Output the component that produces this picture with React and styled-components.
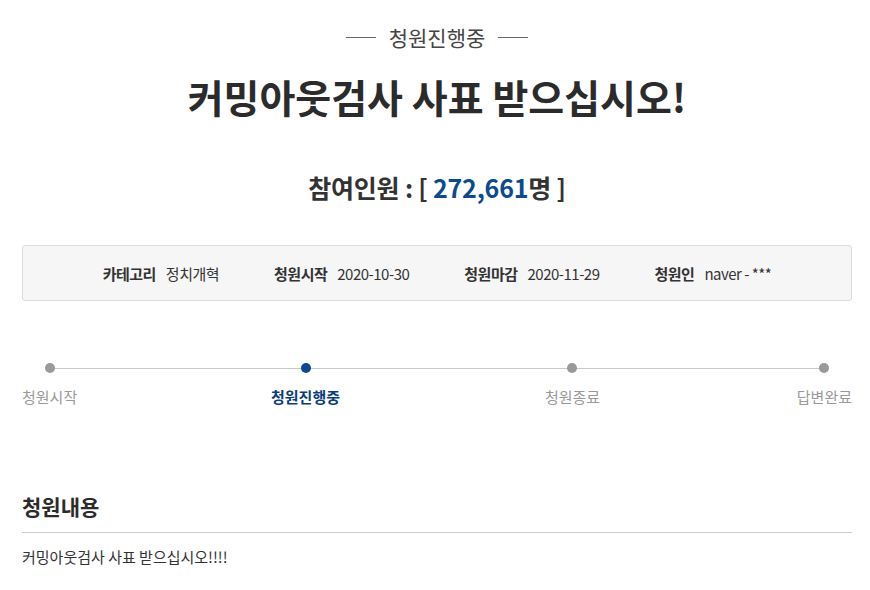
import React from "react";
import styled, { createGlobalStyle } from "styled-components";

const GlobalStyle = createGlobalStyle`
  body {
    margin: 0;
    background: #fff;
    font-family: "Noto Sans CJK KR", "Noto Sans", sans-serif;
    color: #333;
  }
`;

const steps = [
  { label: "청원시작", active: false },
  { label: "청원진행중", active: true },
  { label: "청원종료", active: false },
  { label: "답변완료", active: false },
];

const info = [
  { label: "카테고리", value: "정치개혁" },
  { label: "청원시작", value: "2020-10-30" },
  { label: "청원마감", value: "2020-11-29" },
  { label: "청원인", value: "naver - ***" },
];

function App() {
  return (
    <Wrapper>
      <GlobalStyle />
      <Status>청원진행중</Status>
      <Title>커밍아웃검사 사표 받으십시오!</Title>
      <Count>
        참여인원 : [ <span>272,661</span>명 ]
      </Count>
      <InfoBox>
        {info.map((item) => (
          <InfoItem key={item.label}>
            <strong>{item.label}</strong>
            <span>{item.value}</span>
          </InfoItem>
        ))}
      </InfoBox>
      <Progress>
        {steps.map((step) => (
          <Step key={step.label} active={step.active}>
            <Dot active={step.active} />
            {step.label}
          </Step>
        ))}
      </Progress>
      <SectionTitle>청원내용</SectionTitle>
      <Content>커밍아웃검사 사표 받으십시오!!!!</Content>
    </Wrapper>
  );
}

export default App;

const Wrapper = styled.div`
  padding: 0 18px 0 22px;
`;

const Status = styled.div`
  display: flex;
  align-items: center;
  justify-content: center;
  gap: 13px;
  padding-top: 24px;
  font-size: 21px;
  line-height: 26px;
  color: #444;
  &::before,
  &::after {
    content: "";
    width: 30px;
    height: 1px;
    background: #666;
  }
`;

const Title = styled.h1`
  margin: 20px 0 0;
  text-align: center;
  font-size: 39px;
  line-height: 52px;
  font-weight: 700;
  color: #2b2b2b;
`;

const Count = styled.h2`
  margin: 48px 0 0;
  text-align: center;
  font-size: 25px;
  line-height: 34px;
  font-weight: 700;
  letter-spacing: -0.2px;
  color: #333;
  span {
    color: #0c4a8f;
  }
`;

const InfoBox = styled.div`
  display: flex;
  justify-content: center;
  align-items: center;
  gap: 55px;
  height: 54px;
  margin-top: 41px;
  background: #f6f6f6;
  border: 1px solid #dcdcdc;
  border-radius: 3px;
`;

const InfoItem = styled.div`
  display: flex;
  align-items: center;
  gap: 10px;
  font-size: 15px;
  letter-spacing: -0.5px;
  color: #333;
  strong {
    font-weight: 700;
  }
`;

const Progress = styled.div`
  position: relative;
  display: grid;
  grid-template-columns: 30% 33% 1fr auto;
  margin-top: 62px;
  &::before {
    content: "";
    position: absolute;
    top: 5px;
    left: 27px;
    right: 28px;
    height: 1px;
    background: #c8c8c8;
  }
`;

const Step = styled.div`
  display: flex;
  flex-direction: column;
  align-items: center;
  gap: 14px;
  justify-self: start;
  white-space: nowrap;
  font-size: 15px;
  line-height: 20px;
  color: ${(p) => (p.active ? "#0b3d7e" : "#999")};
  font-weight: ${(p) => (p.active ? 700 : 400)};
`;

const Dot = styled.span`
  position: relative;
  width: 10px;
  height: 10px;
  border-radius: 50%;
  background: ${(p) => (p.active ? "#0c4a8f" : "#999")};
`;

const SectionTitle = styled.h3`
  margin: 85px 0 0;
  padding-bottom: 12px;
  border-bottom: 1px solid #ccc;
  font-size: 21px;
  line-height: 28px;
  font-weight: 700;
  color: #2b2b2b;
`;

const Content = styled.p`
  margin: 13px 0 0;
  font-size: 15px;
  line-height: 22px;
  color: #333;
`;
